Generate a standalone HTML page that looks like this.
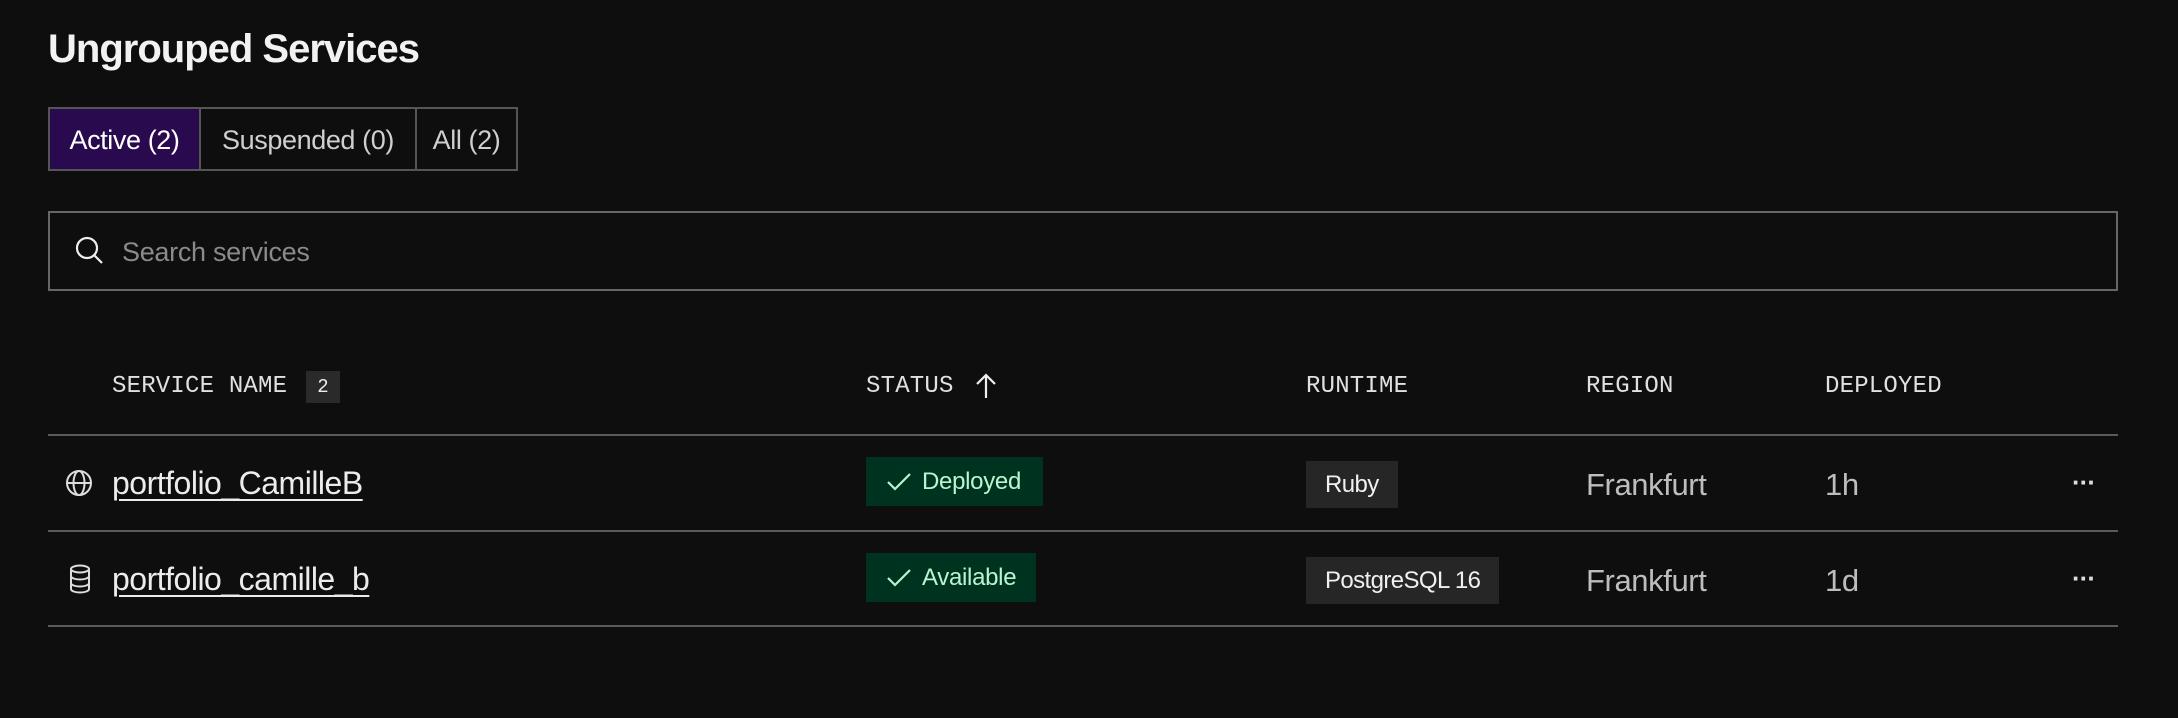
<!DOCTYPE html>
<html><head><style>
*{margin:0;padding:0;box-sizing:border-box}
body{width:2178px;height:718px;background:#0e0e0e;font-family:"Liberation Sans",sans-serif;color:#e8e8e8;position:relative;overflow:hidden}
.a{position:absolute}
h1{position:absolute;left:48px;top:27px;font-size:40px;font-weight:bold;letter-spacing:-1px;color:#f2f2f2}
.tabs{position:absolute;left:48px;top:107px;height:64px;border:2px solid #555;display:flex}
.tab{height:100%;display:flex;align-items:center;justify-content:center;font-size:27px;letter-spacing:-0.4px;color:#cfcfcf;padding-top:2px}
.tab+.tab{border-left:2px solid #555}
.search{position:absolute;left:48px;top:211px;width:2070px;height:80px;border:2px solid #666}
.hd{position:absolute;top:373px;font-family:"Liberation Mono",monospace;font-size:24px;color:#e0e0e0;letter-spacing:0.2px}
.line{position:absolute;left:48px;width:2070px;height:2px;background:#5a5a5a}
.name{position:absolute;left:112px;font-size:32px;text-decoration:underline;text-underline-offset:5px;text-decoration-thickness:2px;letter-spacing:-0.5px;color:#ececec}
.st{position:absolute;left:866px;height:49px;background:#00331f;color:#b8f5d0;font-size:24px;display:flex;align-items:center;padding-left:20px;letter-spacing:-0.3px}
.rt{position:absolute;left:1306px;height:47px;background:#262626;color:#f0f0f0;font-size:24px;display:flex;align-items:center;padding:0 19px;letter-spacing:-0.6px}
.tx{position:absolute;font-size:31px;color:#bdbdbd;letter-spacing:-0.4px}
.dots{position:absolute;left:2072px;font-size:26px;font-weight:bold;color:#ddd;letter-spacing:-1px}
</style></head><body>
<h1>Ungrouped Services</h1>
<div class="tabs">
<div class="tab" style="width:149px;background:#2a0a4f;color:#fff">Active (2)</div>
<div class="tab" style="width:216px">Suspended (0)</div>
<div class="tab" style="width:101px">All (2)</div>
</div>
<div class="search">
<svg class="a" style="left:22px;top:21px" width="34" height="34" viewBox="0 0 34 34" fill="none" stroke="#eee" stroke-width="2.2"><circle cx="15" cy="14" r="10"/><path d="M22 21l8 8"/></svg>
<div class="a" style="left:72px;top:24px;font-size:27px;color:#8a8a8a;letter-spacing:-0.3px">Search services</div>
</div>
<div class="hd" style="left:112px">SERVICE NAME</div>
<div class="a" style="left:306px;top:371px;width:34px;height:32px;background:#2a2a2a;font-family:'Liberation Mono',monospace;font-size:19px;color:#eee;text-align:center;line-height:32px">2</div>
<div class="hd" style="left:866px">STATUS</div>
<svg class="a" style="left:972px;top:372px" width="28" height="28" viewBox="0 0 28 28" fill="none" stroke="#eee" stroke-width="2.2"><path d="M14 26V3M5 12l9-9 9 9"/></svg>
<div class="hd" style="left:1306px">RUNTIME</div>
<div class="hd" style="left:1586px">REGION</div>
<div class="hd" style="left:1825px">DEPLOYED</div>
<div class="line" style="top:434px"></div>
<div class="line" style="top:530px"></div>
<div class="line" style="top:625px"></div>

<svg class="a" style="left:65px;top:469px" width="28" height="28" viewBox="0 0 28 28" fill="none" stroke="#ddd" stroke-width="2"><circle cx="14" cy="14" r="12"/><ellipse cx="14" cy="14" rx="5.5" ry="12"/><path d="M2 14h24"/></svg>
<div class="name" style="top:465px">portfolio_CamilleB</div>
<div class="st" style="top:457px;width:177px"><svg width="26" height="22" viewBox="0 0 26 22" fill="none" stroke="#b8f5d0" stroke-width="2.2" style="margin-right:10px"><path d="M2 11l7 7L24 3"/></svg>Deployed</div>
<div class="rt" style="top:461px">Ruby</div>
<div class="tx" style="left:1586px;top:467px">Frankfurt</div>
<div class="tx" style="left:1825px;top:467px">1h</div>
<div class="dots" style="top:467px">···</div>

<svg class="a" style="left:68px;top:564px" width="24" height="30" viewBox="0 0 24 30" fill="none" stroke="#ddd" stroke-width="2"><ellipse cx="12" cy="5" rx="9" ry="3.5"/><path d="M3 5v20c0 2 4 3.5 9 3.5s9-1.5 9-3.5V5M3 12c0 2 4 3.5 9 3.5s9-1.5 9-3.5M3 19c0 2 4 3.5 9 3.5s9-1.5 9-3.5"/></svg>
<div class="name" style="top:561px">portfolio_camille_b</div>
<div class="st" style="top:553px;width:170px"><svg width="26" height="22" viewBox="0 0 26 22" fill="none" stroke="#b8f5d0" stroke-width="2.2" style="margin-right:10px"><path d="M2 11l7 7L24 3"/></svg>Available</div>
<div class="rt" style="top:557px">PostgreSQL 16</div>
<div class="tx" style="left:1586px;top:563px">Frankfurt</div>
<div class="tx" style="left:1825px;top:563px">1d</div>
<div class="dots" style="top:563px">···</div>
</body></html>
